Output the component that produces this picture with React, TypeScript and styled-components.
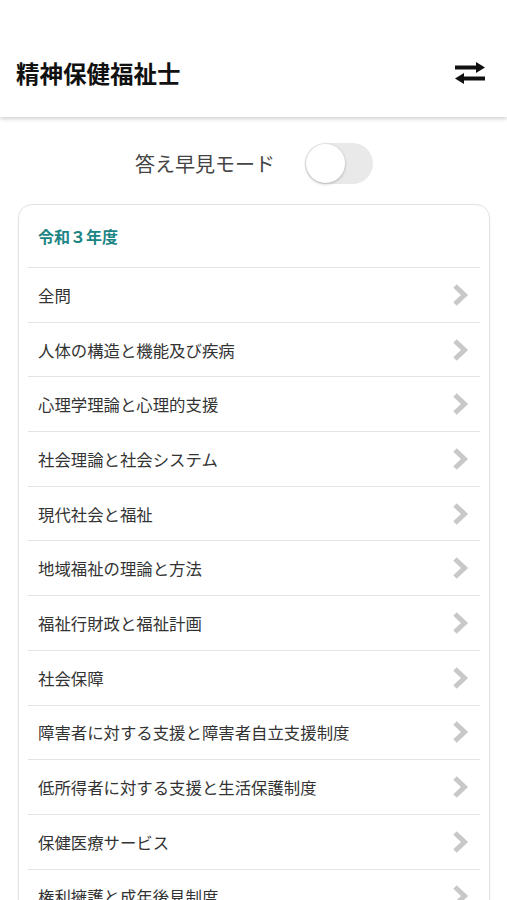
import { useState } from "react";
import styled, { createGlobalStyle } from "styled-components";

const subjects = [
  "全問",
  "人体の構造と機能及び疾病",
  "心理学理論と心理的支援",
  "社会理論と社会システム",
  "現代社会と福祉",
  "地域福祉の理論と方法",
  "福祉行財政と福祉計画",
  "社会保障",
  "障害者に対する支援と障害者自立支援制度",
  "低所得者に対する支援と生活保護制度",
  "保健医療サービス",
  "権利擁護と成年後見制度",
];

function SwapIcon() {
  return (
    <svg width="32" height="24" viewBox="0 0 32 24">
      <path d="M1 6.5 H24" stroke="#111" strokeWidth="4" />
      <path d="M22 1 L31 6.5 L22 12 Z" fill="#111" />
      <path d="M8 17.5 H31" stroke="#111" strokeWidth="4" />
      <path d="M10 12 L1 17.5 L10 23 Z" fill="#111" />
    </svg>
  );
}

function Chevron() {
  return (
    <svg width="18" height="24" viewBox="0 0 18 24">
      <path d="M4 3 L13.5 12 L4 21" fill="none" stroke="#c8c8c8" strokeWidth="5" strokeLinejoin="miter" />
    </svg>
  );
}

function App() {
  const [quick, setQuick] = useState(false);

  return (
    <>
      <GlobalStyle />
      <Header>
        <Title>精神保健福祉士</Title>
        <IconButton>
          <SwapIcon />
        </IconButton>
      </Header>
      <Main>
        <ToggleRow>
          <ToggleLabel>答え早見モード</ToggleLabel>
          <Switch $on={quick} onClick={() => setQuick(!quick)}>
            <Knob $on={quick} />
          </Switch>
        </ToggleRow>
        <Card>
          <CardTitle>令和３年度</CardTitle>
          {subjects.map((s) => (
            <Row key={s}>
              <RowText>{s}</RowText>
              <Chevron />
            </Row>
          ))}
        </Card>
      </Main>
    </>
  );
}

export default App;

const GlobalStyle = createGlobalStyle`
  body {
    margin: 0;
    background: #fff;
    font-family: "Noto Sans CJK JP", "Noto Sans", sans-serif;
    overflow: hidden;
  }
`;

const Header = styled.header`
  height: 117px;
  display: flex;
  align-items: flex-end;
  justify-content: space-between;
  padding: 0 21px 29px 16px;
  box-sizing: border-box;
  background: #fff;
  box-shadow: 0 2px 4px rgba(0, 0, 0, 0.18);
  position: relative;
`;

const Title = styled.h1`
  font-size: 23.5px;
  line-height: 30px;
  font-weight: 700;
  color: #111;
  margin: 0;
`;

const IconButton = styled.div`
  display: flex;
  padding-bottom: 3px;
`;

const Main = styled.main`
  padding: 0 17px 0 18px;
`;

const ToggleRow = styled.div`
  display: flex;
  align-items: center;
  justify-content: center;
  gap: 30px;
  padding: 26px 0 20px 0;
`;

const ToggleLabel = styled.span`
  font-size: 20px;
  color: #444;
`;

const Switch = styled.div<{ $on: boolean }>`
  width: 68px;
  height: 41px;
  border-radius: 21px;
  background: ${(p) => (p.$on ? "#1b8585" : "#e9e9e9")};
  display: flex;
  align-items: center;
  padding: 1px;
  box-sizing: border-box;
  justify-content: ${(p) => (p.$on ? "flex-end" : "flex-start")};
`;

const Knob = styled.div<{ $on: boolean }>`
  width: 39px;
  height: 39px;
  border-radius: 50%;
  background: #fff;
  box-shadow: 0 1px 3px rgba(0, 0, 0, 0.25);
`;

const Card = styled.section`
  border: 1px solid #e2e2e2;
  border-radius: 14px;
  padding: 0 9px;
  box-shadow: 0 1px 3px rgba(0, 0, 0, 0.05);
`;

const CardTitle = styled.h2`
  font-size: 16px;
  font-weight: 700;
  color: #1b8585;
  margin: 0;
  height: 62px;
  line-height: 62px;
  padding-left: 10px;
  border-bottom: 1px solid #e4e4e4;
`;

const Row = styled.div`
  display: flex;
  align-items: center;
  justify-content: space-between;
  height: 53.7px;
  padding: 0 11px 0 10px;
  border-bottom: 1px solid #e4e4e4;
`;

const RowText = styled.span`
  font-size: 16.4px;
  color: #333;
`;
